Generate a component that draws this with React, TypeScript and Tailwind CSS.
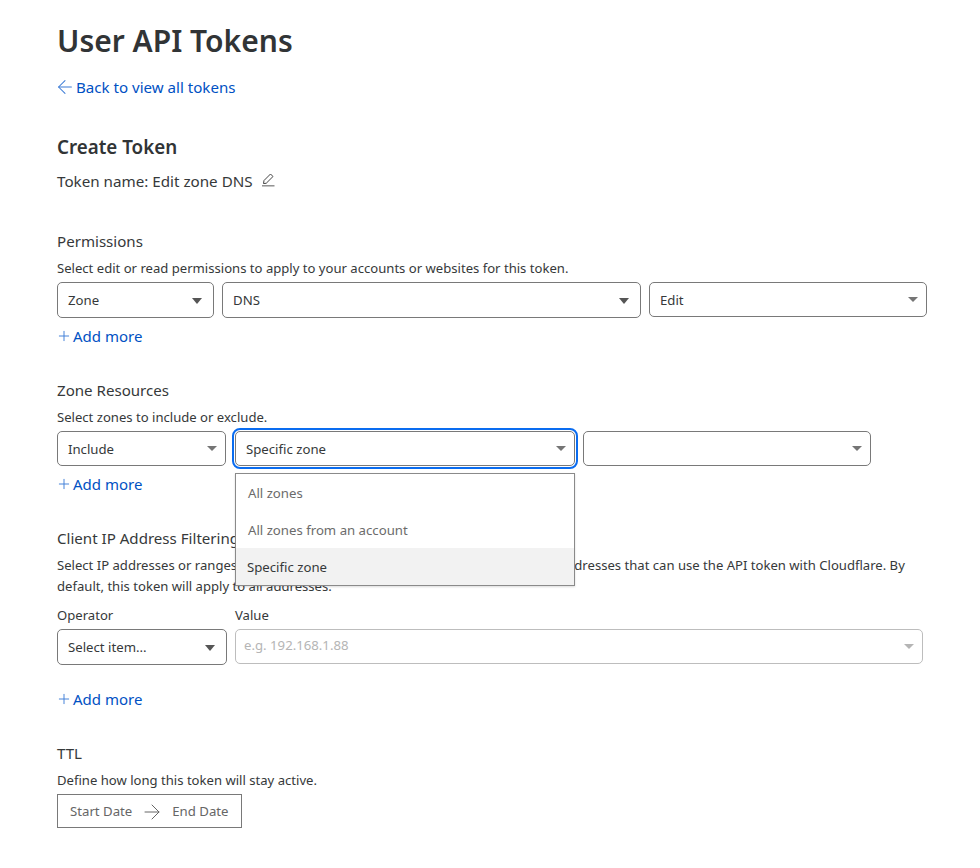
import { ArrowLeft, ArrowRight, Plus } from "lucide-react";

function Select({
  label,
  className,
  disabled,
  strong,
}: {
  label?: string;
  className: string;
  disabled?: boolean;
  strong?: boolean;
}) {
  return (
    <div
      className={`flex shrink-0 items-center justify-between rounded-[5px] border text-[13.2px] ${
        disabled ? "border-[#bdbdbd] pl-[8px] text-[#b5b5b5]" : "border-[#797979] pl-[10px] text-[#36393a]"
      } ${strong ? "pr-[11px]" : "pr-[8px]"} ${className}`}
    >
      <span className={disabled ? "-mt-[2px]" : "mt-[2px]"}>{label}</span>
      {strong ? (
        <span className="mt-[1px] h-0 w-0 border-x-[5.5px] border-t-[6px] border-x-transparent border-t-[#555]" />
      ) : (
        <span
          className={`h-0 w-0 border-x-[5px] border-t-[5px] border-x-transparent ${
            disabled ? "border-t-[#b5b5b5]" : "border-t-[#757575]"
          }`}
        />
      )}
    </div>
  );
}

function AddMore({ className }: { className: string }) {
  return (
    <a href="#add" className={`flex items-center text-[15px] leading-6 text-[#0051c3] ${className}`}>
      <Plus size={16} strokeWidth={1.4} className="mr-[1px] -ml-[1px] text-[#3b7bd6]" />
      Add more
    </a>
  );
}

function SectionHead({ title, text, className }: { title: string; text: string; className: string }) {
  return (
    <div className={className}>
      <h3 className="text-[15.1px] leading-6 font-normal text-[#36393a]">{title}</h3>
      <p className="mt-[5px] w-[866px] text-[13.1px] leading-[21px] text-[#36393a]">{text}</p>
    </div>
  );
}

export default function App() {
  return (
    <div className="h-[868px] overflow-hidden bg-white pt-[19px] pl-[57px] font-['Noto_Sans',sans-serif] text-[#36393a]">
      <h1 className="text-[30px] leading-[44px] font-semibold text-[#313436]">User API Tokens</h1>
      <a href="#back" className="mt-[12px] flex items-center text-[15.1px] leading-6 text-[#0051c3]">
        <ArrowLeft size={22} strokeWidth={1.1} className="-ml-[3px] text-[#3b7bd6]" />
        Back to view all tokens
      </a>

      <h2 className="mt-[35px] text-[18.8px] leading-[26px] font-semibold text-[#313436]">Create Token</h2>
      <div className="mt-[9px] flex items-center text-[15.2px] leading-6">
        Token name: Edit zone DNS
        <svg width="14" height="14" viewBox="0 0 14 14" fill="none" className="-mt-[3px] ml-[8px]">
          <path d="M2.5 10.5 L3 7.5 L9.5 1 L12 3.5 L5.2 10.3 Z" stroke="#444" strokeWidth="1" />
          <path d="M1 12.8 H13.5" stroke="#888" strokeWidth="1.4" />
        </svg>
      </div>

      <SectionHead
        className="mt-[36px]"
        title="Permissions"
        text="Select edit or read permissions to apply to your accounts or websites for this token."
      />
      <div className="mt-[3px] flex items-start gap-[8px]">
        <Select label="Zone" strong className="h-[36px] w-[157px]" />
        <Select label="DNS" strong className="h-[36px] w-[419px]" />
        <Select label="Edit" className="h-[35px] w-[278px]" />
      </div>
      <AddMore className="mt-[6px]" />

      <SectionHead className="mt-[30px]" title="Zone Resources" text="Select zones to include or exclude." />
      <div className="mt-[3px] flex">
        <Select label="Include" className="h-[35px] w-[169px]" />
        <div className="relative ml-[9px] h-[35px] w-[340px] shrink-0">
          <Select
            label="Specific zone"
            className="h-[35px] w-full border-[#0a6cf0] outline-2 outline-offset-1 outline-[#0a6cf0]"
          />
          <ul className="absolute top-[42px] left-0 z-10 h-[113px] w-[340px] border border-[#8a8a8a] bg-white pt-[1px] text-[13.2px] text-[#6b6b6b] shadow-[0_1px_2px_rgba(0,0,0,0.15)]">
            <li className="flex h-[37px] items-center pl-[12px]">All zones</li>
            <li className="flex h-[36px] items-center pt-[2px] pl-[12px]">All zones from an account</li>
            <li className="flex h-[37px] items-center bg-[#f2f2f2] pt-[2px] pl-[11px] text-[#36393a]">Specific zone</li>
          </ul>
        </div>
        <Select className="ml-[8px] h-[35px] w-[288px]" />
      </div>
      <AddMore className="mt-[6px]" />

      <SectionHead
        className="mt-[30px]"
        title="Client IP Address Filtering"
        text="Select IP addresses or ranges of IP addresses to filter and clearly define the list of addresses that can use the API token with Cloudflare. By default, this token will apply to all addresses."
      />
      <div className="mt-[8px] flex gap-[8px]">
        <div>
          <div className="text-[13.1px] leading-5">Operator</div>
          <Select label="Select item..." strong className="mt-[4px] h-[36px] w-[170px]" />
        </div>
        <div>
          <div className="text-[13.1px] leading-5">Value</div>
          <Select label="e.g. 192.168.1.88" disabled className="mt-[4px] h-[35px] w-[688px]" />
        </div>
      </div>
      <AddMore className="mt-[22px]" />

      <SectionHead className="mt-[30px]" title="TTL" text="Define how long this token will stay active." />
      <div className="mt-[3px] flex h-[34px] w-[185px] items-center border border-[#797979] pt-[2px] pl-[12px] text-[13.2px] text-[#666]">
        Start Date
        <ArrowRight size={24} strokeWidth={1} className="mr-[8px] ml-[8px] shrink-0" />
        End Date
      </div>
    </div>
  );
}
